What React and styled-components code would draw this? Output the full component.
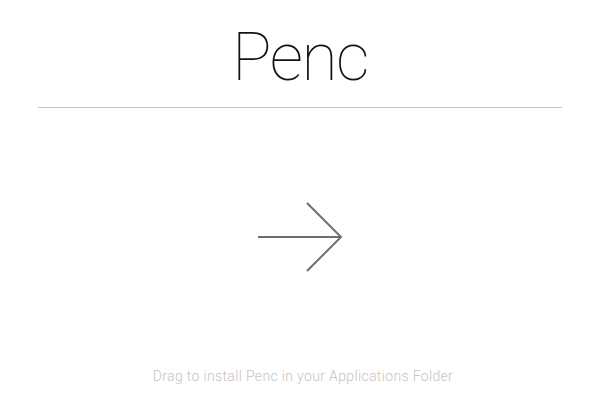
import styled, { createGlobalStyle } from 'styled-components';

const GlobalStyle = createGlobalStyle`
  html, body {
    margin: 0;
    padding: 0;
    background: #ffffff;
  }
  body {
    font-family: Roboto, "Liberation Sans", sans-serif;
  }
`;

const Page = styled.div`
  width: 600px;
  height: 400px;
  display: flex;
  flex-direction: column;
  align-items: center;
  box-sizing: border-box;
`;

const Title = styled.h1`
  margin: 20px 0 0;
  font-size: 66px;
  font-weight: 100;
  line-height: 76px;
  color: #111;
  letter-spacing: -1.5px;
`;

const Divider = styled.hr`
  align-self: stretch;
  margin: 11px 38px 0;
  border: none;
  border-top: 1px solid #c2c2c2;
`;

const ArrowArea = styled.div`
  flex: 1;
  display: flex;
  align-items: center;
  justify-content: center;
  padding-bottom: 2px;
`;

const Hint = styled.p`
  margin: 0 0 16px 6px;
  font-size: 14px;
  color: #c4c4c4;
  font-weight: 300;
  letter-spacing: 0.35px;
`;

const Arrow = () => (
  <svg width="88" height="72" viewBox="0 0 88 72" fill="none">
    <path d="M2 36 H84" stroke="#6e6e6e" strokeWidth="2" />
    <path d="M51 2 L85 36 L51 70" stroke="#6e6e6e" strokeWidth="2" />
  </svg>
);

const App = () => (
  <>
    <GlobalStyle />
    <Page>
      <Title>Penc</Title>
      <Divider />
      <ArrowArea>
        <Arrow />
      </ArrowArea>
      <Hint>Drag to install Penc in your Applications Folder</Hint>
    </Page>
  </>
);

export default App;
